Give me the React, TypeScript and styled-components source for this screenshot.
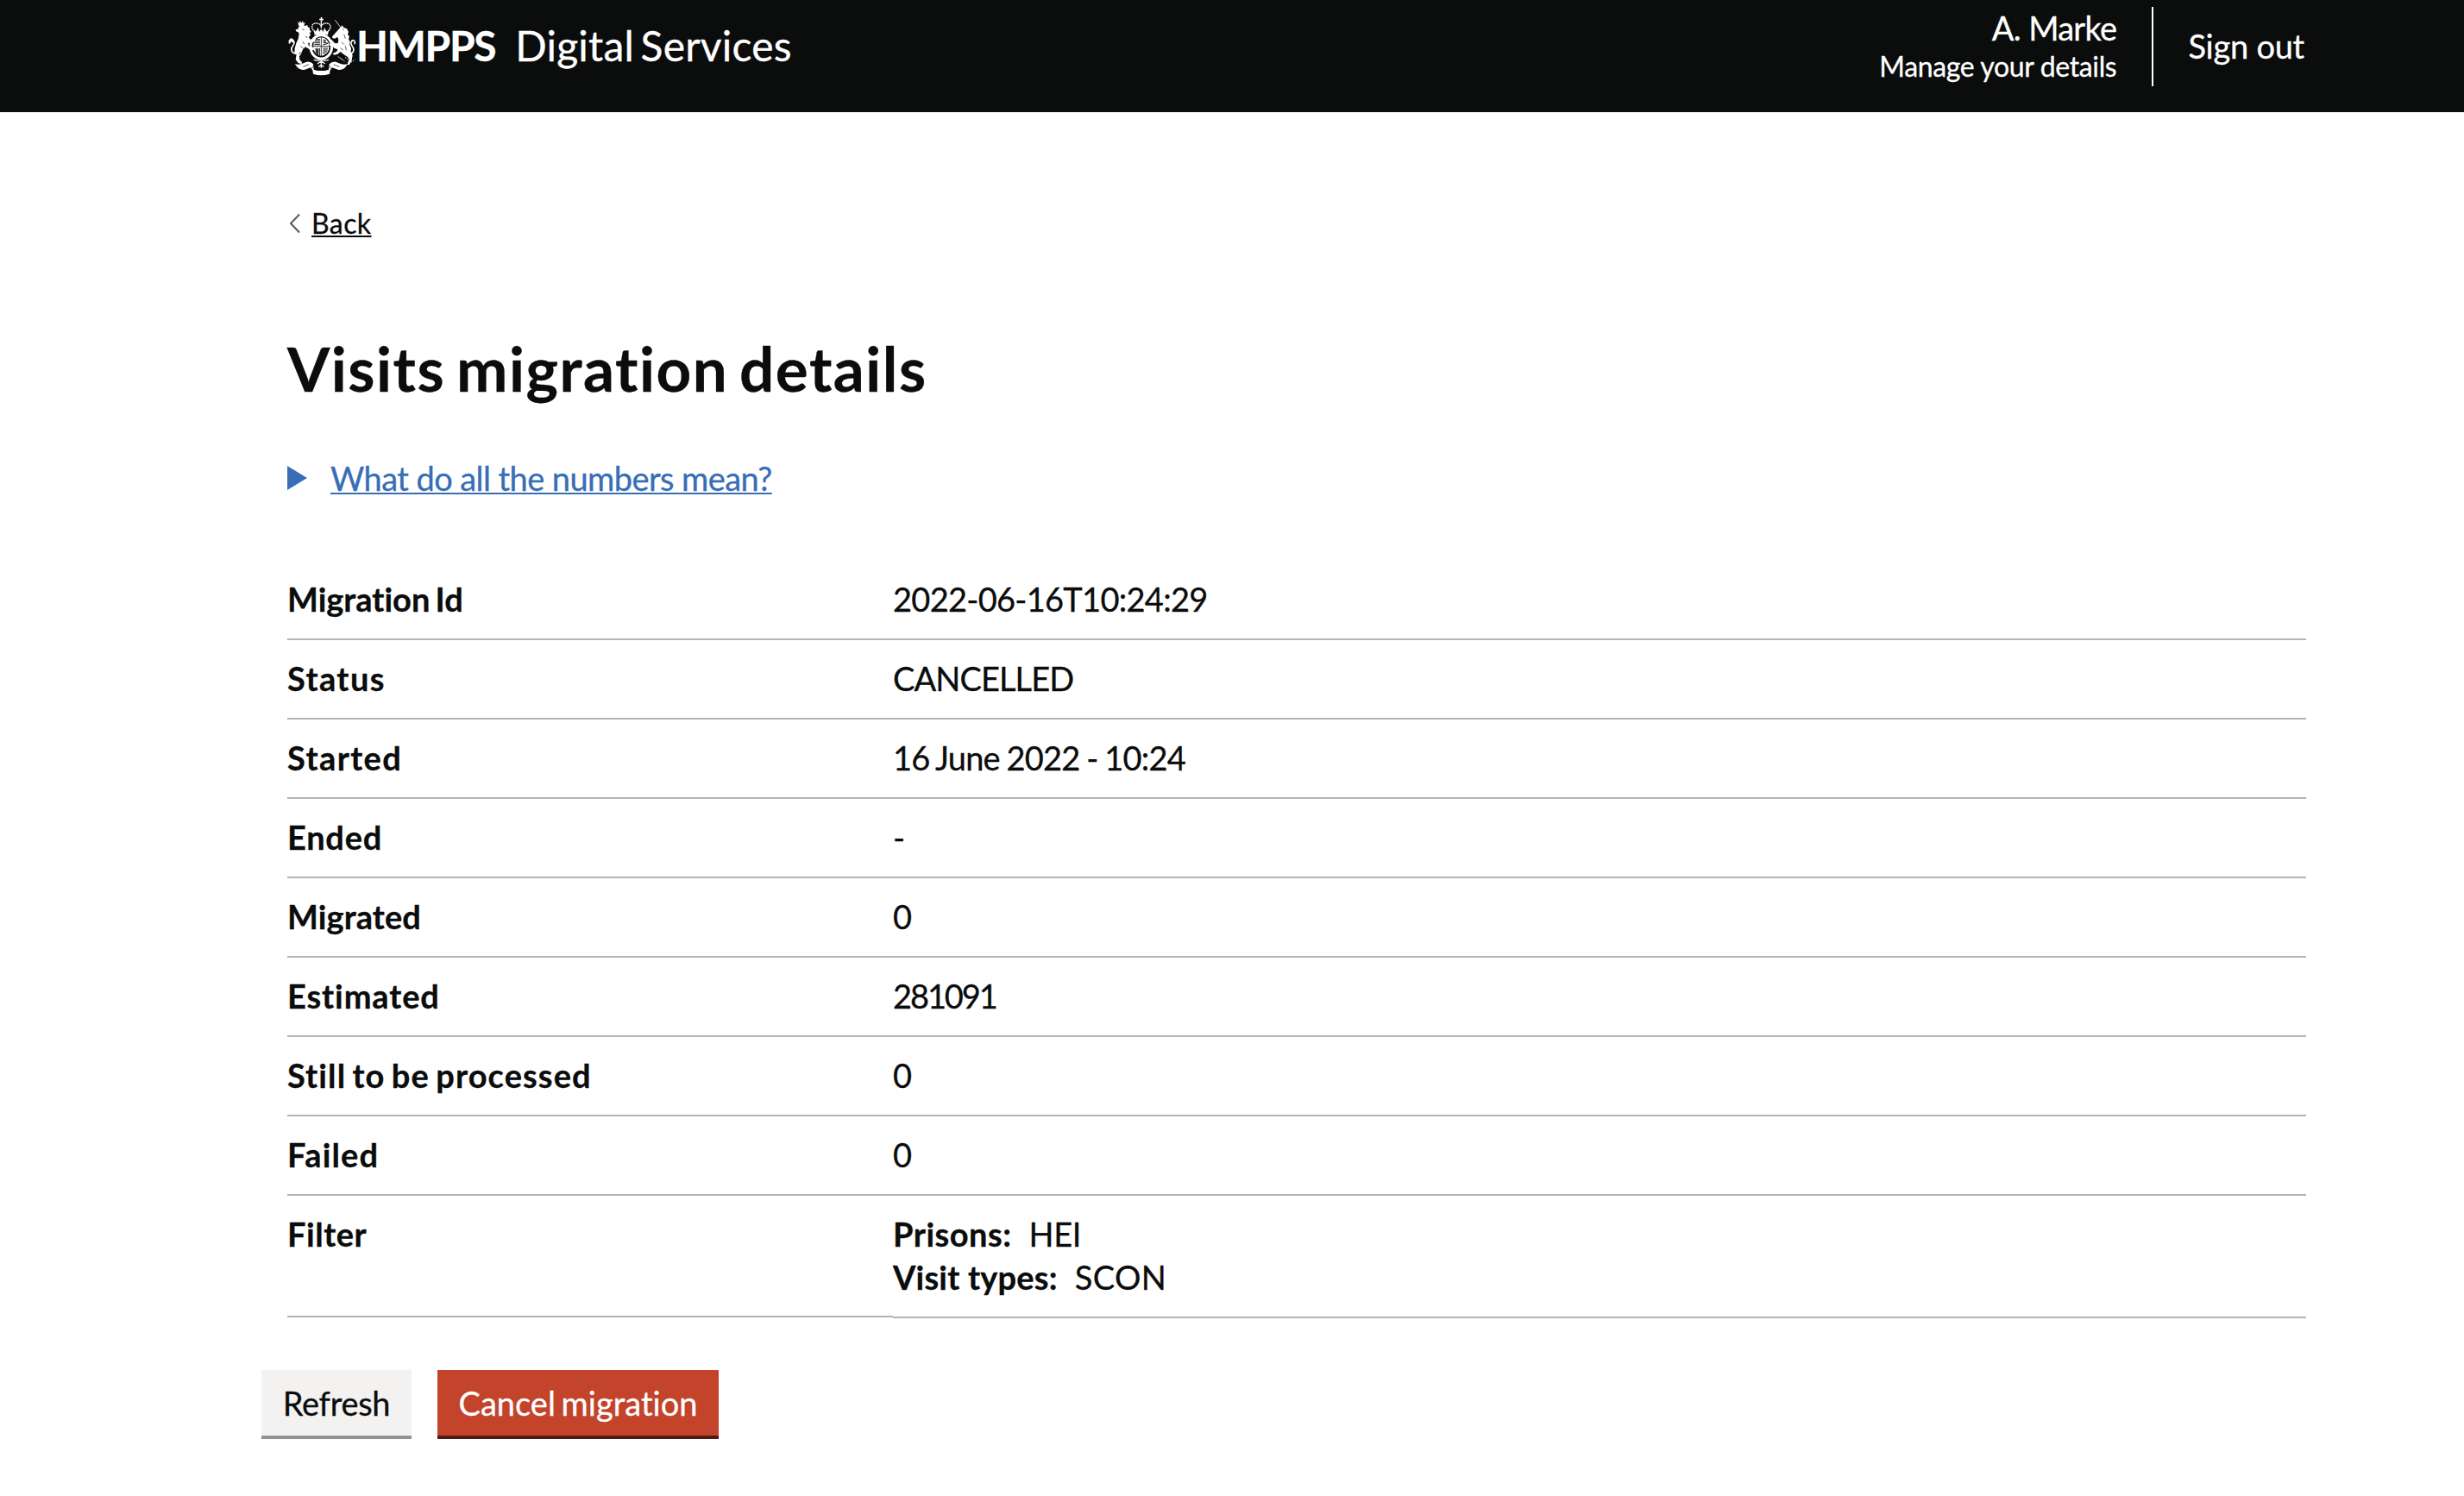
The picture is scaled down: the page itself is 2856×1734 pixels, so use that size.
import React from 'react';
import styled, { createGlobalStyle } from 'styled-components';

const ink = '#0b0c0c';

const GlobalStyle = createGlobalStyle`
  *, *::before, *::after { box-sizing: border-box; }
  body {
    margin: 0;
    background: #fff;
    color: ${ink};
    font-family: Lato, "Liberation Sans", sans-serif;
    font-size: 38px;
    line-height: 50px;
    font-variant-ligatures: none;
    -webkit-text-stroke: 0.3px currentColor;
  }
  h1, dl, dt, dd { margin: 0; }
`;

const Text = styled.span<{ $ls?: number; $ws?: number }>`
  letter-spacing: ${(p) => p.$ls ?? 0}px;
  word-spacing: ${(p) => p.$ws ?? 0}px;
  white-space: pre;
`;

const Header = styled.header`
  display: flex;
  justify-content: space-between;
  align-items: flex-start;
  height: 130px;
  padding: 0 185px 0 334px;
  background: ${ink};
  color: #fff;
`;

const Brand = styled.div`
  display: flex;
  align-items: flex-start;
  padding-top: 20px;
  font-size: 48px;
  line-height: 66px;
`;

const Crest = styled.svg`
  display: block;
  width: 79px;
  height: 68px;
`;

const Organisation = styled(Text)`
  font-weight: 700;
`;

const Service = styled(Text)`
  margin-left: 23px;
`;

const Account = styled.div`
  display: flex;
  padding-top: 8px;
`;

const User = styled.div`
  display: flex;
  flex-direction: column;
  align-items: flex-end;
  height: 92px;
  padding-right: 41px;
  border-right: 2px solid #fff;
  line-height: 48px;
`;

const Manage = styled(Text)`
  font-size: 32px;
  line-height: 42px;
`;

const SignOut = styled(Text)`
  margin: 21px 0 0 40px;
  line-height: 48px;
`;

const Main = styled.main`
  display: flex;
  flex-direction: column;
  align-items: flex-start;
  padding: 109px 183px 0 333px;
`;

const BackLink = styled.a`
  display: flex;
  align-items: center;
  gap: 13px;
  padding-left: 2px;
  font-size: 32px;
  line-height: 40px;
`;

const Underlined = styled(Text)`
  text-decoration: underline;
  text-decoration-thickness: 2px;
  text-underline-offset: 2px;
`;

const Title = styled.h1`
  margin-top: 103px;
  font-size: 71px;
  line-height: 90px;
  font-weight: 700;
`;

const Summary = styled.div`
  display: flex;
  align-items: center;
  gap: 27px;
  margin-top: 57px;
  color: #376eb5;
`;

const List = styled.dl`
  width: 100%;
  margin-top: 71px;
`;

const Row = styled.div`
  display: grid;
  grid-template-columns: 702px 1fr;
`;

const Key = styled.dt<{ $short?: boolean }>`
  padding: 19px 0 ${(p) => (p.$short ? 20 : 21)}px;
  align-self: ${(p) => (p.$short ? 'start' : 'stretch')};
  height: ${(p) => (p.$short ? '141px' : 'auto')};
  border-bottom: 2px solid #b3b4b5;
  font-weight: 700;
`;

const Value = styled.dd`
  padding: 19px 0 21px;
  border-bottom: 2px solid #b3b4b5;
`;

const FilterLine = styled.div`
  display: flex;
  gap: 20px;
`;

const Strong = styled(Text)`
  font-weight: 700;
`;

const Actions = styled.div`
  display: flex;
  gap: 30px;
  margin: 60px 0 0 -30px;
`;

const Button = styled.button<{ $warning?: boolean }>`
  display: flex;
  justify-content: center;
  width: ${(p) => (p.$warning ? 326 : 174)}px;
  height: 80px;
  padding: 13px 0 0;
  border: 0;
  border-bottom: 4px solid ${(p) => (p.$warning ? '#4e1a11' : '#929191')};
  background: ${(p) => (p.$warning ? '#c3432b' : '#f3f2f1')};
  color: ${(p) => (p.$warning ? '#fff' : ink)};
  font: inherit;
  -webkit-text-stroke: inherit;
`;

const rows: { key: string; keyLs: number; keyWs?: number; value: string; ls: number; ws?: number }[] = [
  { key: 'Migration Id', keyLs: 0, keyWs: -3, value: '2022-06-16T10:24:29', ls: -0.72 },
  { key: 'Status', keyLs: 1.4, value: 'CANCELLED', ls: -0.9 },
  { key: 'Started', keyLs: 1.4, value: '16 June 2022 - 10:24', ls: -0.8, ws: -1.2 },
  { key: 'Ended', keyLs: 0.75, value: '-', ls: 0 },
  { key: 'Migrated', keyLs: 0.1, value: '0', ls: 0 },
  { key: 'Estimated', keyLs: 0.89, value: '281091', ls: -2.1 },
  { key: 'Still to be processed', keyLs: 1.1, keyWs: -3, value: '0', ls: 0 },
  { key: 'Failed', keyLs: 1.2, value: '0', ls: 0 },
];

function RoyalCrest() {
  return (
    <Crest viewBox="20 18 237 204" fill="#fff" aria-hidden="true">
      {/* crown */}
      <path d="M133 18h5v5h5v5h-5v6h-5v-6h-5v-5h5z" />
      <path d="M113 69C98 55 101 40 115 39q13-1 20 9q7-10 20-9c14 1 17 16 2 30" fill="none" stroke="#fff" strokeWidth="4" strokeDasharray="5 1.5" />
      <path d="M135 34v22M122 56l4 10M148 56l-4 10" stroke="#fff" strokeWidth="4" />
      <path d="M109 60l6 8 6-7 7 7 7-9 7 9 7-7 6 7 6-8-3 20q-23-6-46 0z" />
      {/* shield and garter */}
      <ellipse cx="135" cy="121" rx="37" ry="41" fill="none" stroke="#fff" strokeWidth="9" />
      <ellipse cx="135" cy="120" rx="28" ry="32" />
      <path d="M135 87v66M107 119h56" stroke="#0b0c0c" strokeWidth="2.5" />
      <path d="M113 101h18M111 107h20M111 113h20M118 95h13M140 96l12 4-10 5 16 4-17 5M114 126l7 4v16M124 125v26M129 126v26M117 126v18M141 126h17M141 132h16M141 138h14M141 144h9" fill="none" stroke="#0b0c0c" strokeWidth="3" />
      {/* lion */}
      <path d="M53 34l6 5 2-9 5 8 5-8 2 9 6-4-4 13H57z" />
      <path d="M57 50q10-8 22-2l8-3 1 6 8 5-1 6 5 6-5 5 3 8-6 5 3 8 11 2 7-8 4 2-5 13-15 5-8-1 3 12 12 2 8 7-4 5-15-4-13-8-9 9-5 13-7 11 1 12 8 8-1 7-12-4-9-12 3-19-7-5 1-15 5-18 7-15 3-18-4-6-7-2-1-6 8-2z" />
      <path d="M49 145c-18-2-22-16-13-27 7-9 7-18-2-20q-8 2-10 12" fill="none" stroke="#fff" strokeWidth="5" />
      <path d="M31 90l9 7-4 11-6-7-9 5q0-11 10-16z" />
      <path d="M69 60l7 2M80 84l7 5M63 118l10 9M56 145l10-5M71 103l5 9" stroke="#0b0c0c" strokeWidth="2" />
      {/* unicorn */}
      <path d="M183 28l20 26" stroke="#fff" strokeWidth="2.5" />
      <path d="M201 54l8-8 3 7 12 5 6 11-3 9 6 7-3 9 5 9-1 12 5 10-1 14 6 11-3 18-8 15-7 1 2-10 4-9-5-9-13-8-12-10-10 8-13 3-4-5 14-7 3-7-12-5-7-9-8 1-3-6 8-4-5-8 6-3 11 12 11 1 2-12-3-10-10 5-9-2 1-6z" />
      <path d="M232 146c19-4 19-18 10-29-6-8-4-17 4-19q9 3 5 14" fill="none" stroke="#fff" strokeWidth="5" />
      <path d="M209 60l5 1M214 77l5 15M206 104l9 9M219 118l3 15M202 125l9 7" stroke="#0b0c0c" strokeWidth="2" />
      <path d="M193 155l13 7 11 10M218 157l13 10M239 174l13-8" stroke="#fff" strokeWidth="3" strokeDasharray="4 3" />
      {/* motto scroll and foliage */}
      <path d="M43 180q12 5 24 0l17-7q15-2 23 8l2 19q26 8 52 0l2-19q9-10 23-8l17 7q12 5 24 0l-8 12q-10 12-26 8l-20-7-7 9-2 13q-29 10-57 0l-2-13-7-9-20 7q-16 4-26-8z" />
      <path d="M109 176q5 9 1 24q25 7 50 0q-4-15 1-24q-26 8-52 0z" fill="#0b0c0c" />
      <path d="M72 190l20-8M107 187l-5 9M198 190l-20-8M163 187l5 9" fill="none" stroke="#0b0c0c" strokeWidth="2" />
      <path d="M109 166l13 3 13-4 13 4 13-3M135 167v27M122 180l13-10 13 10M126 190l9-6 9 6" fill="none" stroke="#fff" strokeWidth="4" />
    </Crest>
  );
}

export default function App() {
  return (
    <>
      <GlobalStyle />
      <Header>
        <Brand>
          <RoyalCrest />
          <Organisation $ls={-1.37}>HMPPS</Organisation>
          <Service $ls={0.2} $ws={-5}>Digital Services</Service>
        </Brand>
        <Account>
          <User>
            <Text $ls={-0.7}>A. Marke</Text>
            <Manage $ls={-0.36}>Manage your details</Manage>
          </User>
          <SignOut $ls={-0.25}>Sign out</SignOut>
        </Account>
      </Header>
      <Main>
        <BackLink>
          <svg width="13" height="24" viewBox="0 0 13 24" fill="none" stroke="#505a5f" strokeWidth="2">
            <path d="M12 1.5L2 12l10 10.5" />
          </svg>
          <Underlined $ls={0.4}>Back</Underlined>
        </BackLink>
        <Title>
          <Text $ls={1.5} $ws={-6}>Visits migration details</Text>
        </Title>
        <Summary>
          <svg width="23" height="28" viewBox="0 0 23 28" fill="currentColor">
            <path d="M0 0l23 14L0 28z" />
          </svg>
          <Underlined $ls={-0.58}>What do all the numbers mean?</Underlined>
        </Summary>
        <List>
          {rows.map((row) => (
            <Row key={row.key}>
              <Key>
                <Text $ls={row.keyLs} $ws={row.keyWs}>{row.key}</Text>
              </Key>
              <Value>
                <Text $ls={row.ls} $ws={row.ws}>{row.value}</Text>
              </Value>
            </Row>
          ))}
          <Row>
            <Key $short>
              <Text $ls={0.53}>Filter</Text>
            </Key>
            <Value>
              <FilterLine>
                <Strong $ls={0.5}>Prisons:</Strong>
                <Text $ls={-0.3}>HEI</Text>
              </FilterLine>
              <FilterLine>
                <Strong $ls={0.2}>Visit types:</Strong>
                <Text $ls={0.37}>SCON</Text>
              </FilterLine>
            </Value>
          </Row>
        </List>
        <Actions>
          <Button>
            <Text $ls={-0.29}>Refresh</Text>
          </Button>
          <Button $warning>
            <Text $ls={0} $ws={-3}>Cancel migration</Text>
          </Button>
        </Actions>
      </Main>
    </>
  );
}
